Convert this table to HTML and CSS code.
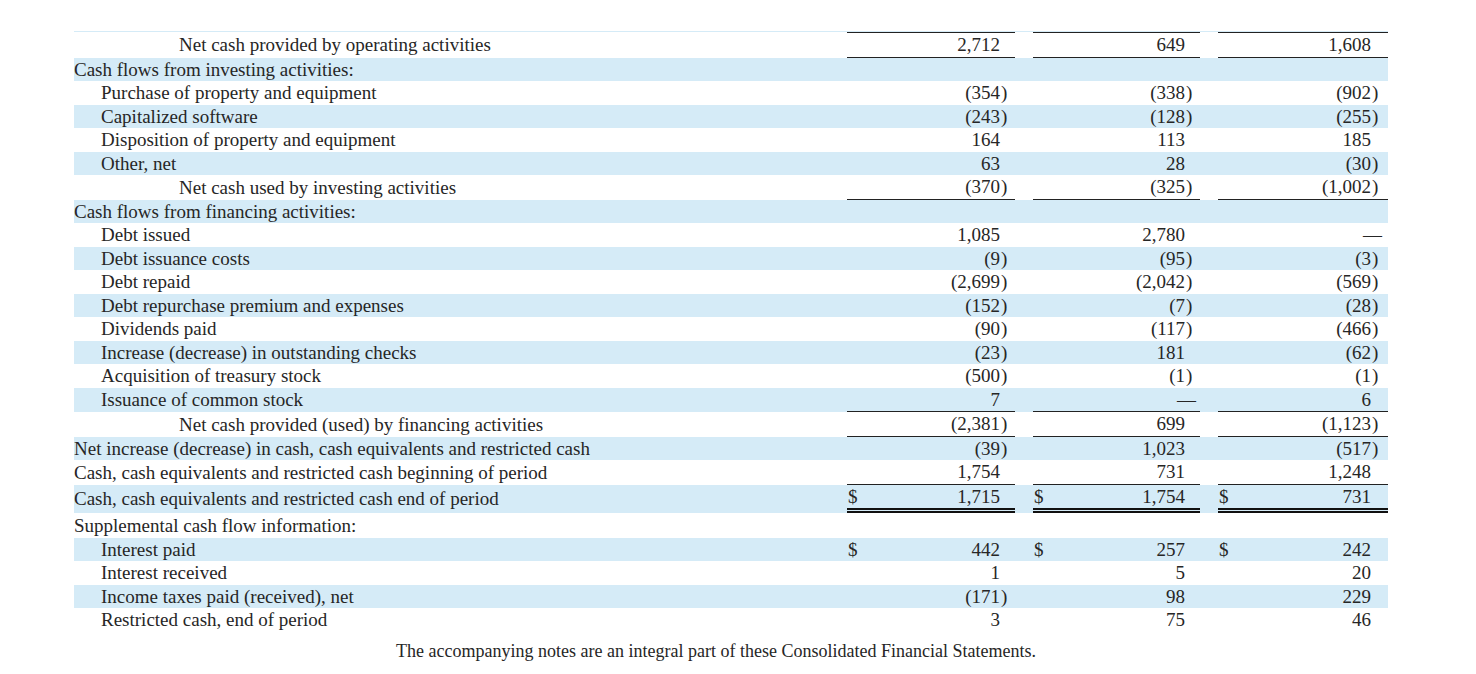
FILE: index.html
```html
<!DOCTYPE html>
<html>
<head>
<meta charset="utf-8">
<title>Cash flows</title>
<link rel="stylesheet" href="styles.css">
</head>
<body>
<div class="page">
<table class="cf">
<colgroup>
<col class="c-label"><col class="c-a"><col class="c-gap"><col class="c-b"><col class="c-gap"><col class="c-c">
</colgroup>
<tbody>
<tr class="s sliver"><td></td><td></td><td></td><td></td><td></td><td></td></tr>
<tr>
<td class="lab l2">Net cash provided by operating activities</td>
<td class="n a t b">2,712<span class="p"></span></td><td class="g"></td>
<td class="n bb t b">649<span class="p"></span></td><td class="g"></td>
<td class="n c t b">1,608<span class="p"></span></td>
</tr>
<tr class="s">
<td class="lab">Cash flows from investing activities:</td>
<td class="n a"></td><td class="g"></td><td class="n bb"></td><td class="g"></td><td class="n c"></td>
</tr>
<tr>
<td class="lab l1">Purchase of property and equipment</td>
<td class="n a">(354<span class="p">)</span></td><td class="g"></td>
<td class="n bb">(338<span class="p">)</span></td><td class="g"></td>
<td class="n c">(902<span class="p">)</span></td>
</tr>
<tr class="s">
<td class="lab l1">Capitalized software</td>
<td class="n a">(243<span class="p">)</span></td><td class="g"></td>
<td class="n bb">(128<span class="p">)</span></td><td class="g"></td>
<td class="n c">(255<span class="p">)</span></td>
</tr>
<tr>
<td class="lab l1">Disposition of property and equipment</td>
<td class="n a">164<span class="p"></span></td><td class="g"></td>
<td class="n bb">113<span class="p"></span></td><td class="g"></td>
<td class="n c">185<span class="p"></span></td>
</tr>
<tr class="s">
<td class="lab l1">Other, net</td>
<td class="n a">63<span class="p"></span></td><td class="g"></td>
<td class="n bb">28<span class="p"></span></td><td class="g"></td>
<td class="n c">(30<span class="p">)</span></td>
</tr>
<tr>
<td class="lab l2">Net cash used by investing activities</td>
<td class="n a b">(370<span class="p">)</span></td><td class="g"></td>
<td class="n bb b">(325<span class="p">)</span></td><td class="g"></td>
<td class="n c b">(1,002<span class="p">)</span></td>
</tr>
<tr class="s">
<td class="lab">Cash flows from financing activities:</td>
<td class="n a"></td><td class="g"></td><td class="n bb"></td><td class="g"></td><td class="n c"></td>
</tr>
<tr>
<td class="lab l1">Debt issued</td>
<td class="n a">1,085<span class="p"></span></td><td class="g"></td>
<td class="n bb">2,780<span class="p"></span></td><td class="g"></td>
<td class="n c"><span class="dash">—</span></td>
</tr>
<tr class="s">
<td class="lab l1">Debt issuance costs</td>
<td class="n a">(9<span class="p">)</span></td><td class="g"></td>
<td class="n bb">(95<span class="p">)</span></td><td class="g"></td>
<td class="n c">(3<span class="p">)</span></td>
</tr>
<tr>
<td class="lab l1">Debt repaid</td>
<td class="n a">(2,699<span class="p">)</span></td><td class="g"></td>
<td class="n bb">(2,042<span class="p">)</span></td><td class="g"></td>
<td class="n c">(569<span class="p">)</span></td>
</tr>
<tr class="s">
<td class="lab l1">Debt repurchase premium and expenses</td>
<td class="n a">(152<span class="p">)</span></td><td class="g"></td>
<td class="n bb">(7<span class="p">)</span></td><td class="g"></td>
<td class="n c">(28<span class="p">)</span></td>
</tr>
<tr>
<td class="lab l1">Dividends paid</td>
<td class="n a">(90<span class="p">)</span></td><td class="g"></td>
<td class="n bb">(117<span class="p">)</span></td><td class="g"></td>
<td class="n c">(466<span class="p">)</span></td>
</tr>
<tr class="s">
<td class="lab l1">Increase (decrease) in outstanding checks</td>
<td class="n a">(23<span class="p">)</span></td><td class="g"></td>
<td class="n bb">181<span class="p"></span></td><td class="g"></td>
<td class="n c">(62<span class="p">)</span></td>
</tr>
<tr>
<td class="lab l1">Acquisition of treasury stock</td>
<td class="n a">(500<span class="p">)</span></td><td class="g"></td>
<td class="n bb">(1<span class="p">)</span></td><td class="g"></td>
<td class="n c">(1<span class="p">)</span></td>
</tr>
<tr class="s">
<td class="lab l1">Issuance of common stock</td>
<td class="n a b">7<span class="p"></span></td><td class="g"></td>
<td class="n bb b"><span class="dash">—</span></td><td class="g"></td>
<td class="n c b">6<span class="p"></span></td>
</tr>
<tr>
<td class="lab l2">Net cash provided (used) by financing activities</td>
<td class="n a b">(2,381<span class="p">)</span></td><td class="g"></td>
<td class="n bb b">699<span class="p"></span></td><td class="g"></td>
<td class="n c b">(1,123<span class="p">)</span></td>
</tr>
<tr class="s">
<td class="lab">Net increase (decrease) in cash, cash equivalents and restricted cash</td>
<td class="n a">(39<span class="p">)</span></td><td class="g"></td>
<td class="n bb">1,023<span class="p"></span></td><td class="g"></td>
<td class="n c">(517<span class="p">)</span></td>
</tr>
<tr>
<td class="lab">Cash, cash equivalents and restricted cash beginning of period</td>
<td class="n a b">1,754<span class="p"></span></td><td class="g"></td>
<td class="n bb b">731<span class="p"></span></td><td class="g"></td>
<td class="n c b">1,248<span class="p"></span></td>
</tr>
<tr class="s">
<td class="lab">Cash, cash equivalents and restricted cash end of period</td>
<td class="n a dbl"><span class="cur">$</span>1,715<span class="p"></span></td><td class="g"></td>
<td class="n bb dbl"><span class="cur">$</span>1,754<span class="p"></span></td><td class="g"></td>
<td class="n c dbl"><span class="cur">$</span>731<span class="p"></span></td>
</tr>
<tr>
<td class="lab sup">Supplemental cash flow information:</td>
<td class="n a"></td><td class="g"></td><td class="n bb"></td><td class="g"></td><td class="n c"></td>
</tr>
<tr class="s">
<td class="lab l1">Interest paid</td>
<td class="n a"><span class="cur">$</span>442<span class="p"></span></td><td class="g"></td>
<td class="n bb"><span class="cur">$</span>257<span class="p"></span></td><td class="g"></td>
<td class="n c"><span class="cur">$</span>242<span class="p"></span></td>
</tr>
<tr>
<td class="lab l1">Interest received</td>
<td class="n a">1<span class="p"></span></td><td class="g"></td>
<td class="n bb">5<span class="p"></span></td><td class="g"></td>
<td class="n c">20<span class="p"></span></td>
</tr>
<tr class="s">
<td class="lab l1">Income taxes paid (received), net</td>
<td class="n a">(171<span class="p">)</span></td><td class="g"></td>
<td class="n bb">98<span class="p"></span></td><td class="g"></td>
<td class="n c">229<span class="p"></span></td>
</tr>
<tr>
<td class="lab l1">Restricted cash, end of period</td>
<td class="n a">3<span class="p"></span></td><td class="g"></td>
<td class="n bb">75<span class="p"></span></td><td class="g"></td>
<td class="n c">46<span class="p"></span></td>
</tr>
</tbody>
</table>
<p class="note">The accompanying notes are an integral part of these Consolidated Financial Statements.</p>
</div>
</body>
</html>
```
FILE: styles.css
```css
html, body {
  margin: 0;
  padding: 0;
  background: #ffffff;
}
body {
  font-family: "Liberation Serif", "Times New Roman", serif;
  font-size: 19px;
  color: #262626;
}
.page {
  padding: 31px 0 0 74px;
  width: 1314px;
}
.cf {
  border-collapse: separate;
  border-spacing: 0;
  width: 1314px;
  table-layout: fixed;
}
.c-label { width: 773px; }
.c-a { width: 168px; }
.c-gap { width: 18px; }
.c-b { width: 167px; }
.c-c { width: 170px; }
.cf td {
  padding: 0;
  line-height: 23.5px;
  vertical-align: middle;
  white-space: nowrap;
}
.cf tr.s {
  background: #d5ebf7;
}
.cf tr.sliver td {
  height: 1px;
  line-height: 1px;
  font-size: 1px;
}
.lab { padding-left: 1px; }
.lab.l1 { padding-left: 27px; }
.lab.l2 { padding-left: 105px; }
.lab.sup { line-height: 23.5px; padding-top: 1px; }
.n {
  text-align: right;
}
.n.a { padding-right: 7px; }
.n.bb { padding-right: 7px; }
.n.c { padding-right: 9px; }
.p {
  display: inline-block;
  width: 8px;
  padding-left: 1px;
  box-sizing: border-box;
  text-align: left;
}
.dash {
  display: inline-block;
  margin-right: -3px;
}
.cur {
  float: left;
  padding-left: 1px;
}
.t { border-top: 1px solid #222; }
.b { border-bottom: 1px solid #222; }
.dbl { border-bottom: 5px double #111; }
.note {
  margin: 8px 0 0 0;
  padding-right: 30px;
  text-align: center;
  line-height: 23.5px;
  font-size: 18px;
}
```
